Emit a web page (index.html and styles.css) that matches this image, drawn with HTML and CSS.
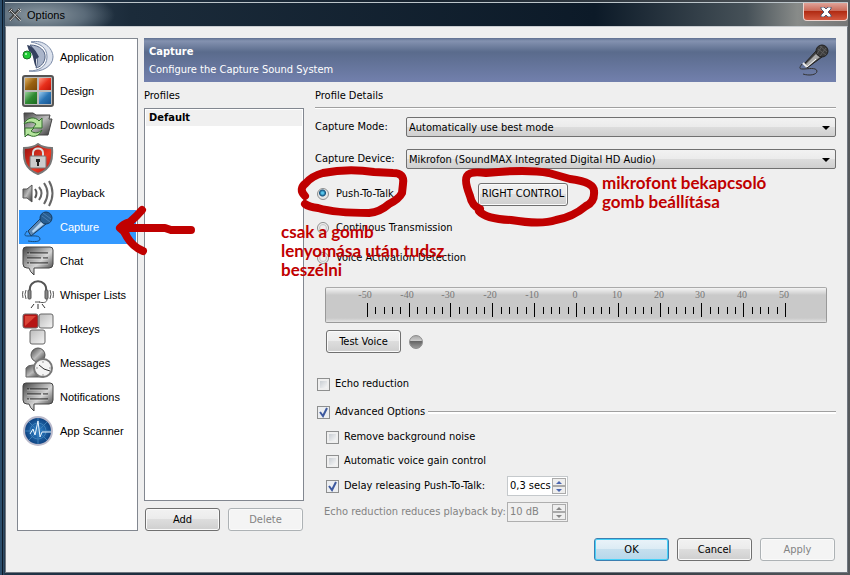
FILE: index.html
```html
<!DOCTYPE html>
<html lang="en">
<head>
    <meta charset="UTF-8">
    <meta name="viewport" content="width=device-width, initial-scale=1.0">
    <title>Options</title>
    <link rel="stylesheet" href="styles.css">
</head>
<body>

<!-- shared gradients and shapes -->
<svg class="defs" width="0" height="0" aria-hidden="true">
    <defs>
        <linearGradient id="gGrey" x1="0" y1="0" x2="1" y2="1"><stop offset="0" stop-color="#444"/><stop offset=".5" stop-color="#bbb"/><stop offset="1" stop-color="#333"/></linearGradient>
        <linearGradient id="gBubble" x1="0" y1="0" x2="1" y2="1"><stop offset="0" stop-color="#444"/><stop offset=".55" stop-color="#d4d4d4"/><stop offset="1" stop-color="#222"/></linearGradient>
        <linearGradient id="gRed" x1="0" y1="0" x2="1" y2="1"><stop offset="0" stop-color="#900d0d"/><stop offset=".6" stop-color="#ec3a24"/><stop offset="1" stop-color="#a91010"/></linearGradient>
        <linearGradient id="gKey" x1="0" y1="0" x2="1" y2="1"><stop offset="0" stop-color="#bbb"/><stop offset="1" stop-color="#f5f5f5"/></linearGradient>
        <linearGradient id="gBrownTile" x1="0" y1="0" x2="1" y2="1"><stop offset="0" stop-color="#e0b060"/><stop offset=".5" stop-color="#9a6210"/><stop offset="1" stop-color="#7a4806"/></linearGradient>
        <linearGradient id="gRedTile" x1="0" y1="0" x2="1" y2="1"><stop offset="0" stop-color="#ff9a84"/><stop offset=".5" stop-color="#e8301c"/><stop offset="1" stop-color="#c01208"/></linearGradient>
        <linearGradient id="gGreenTile" x1="0" y1="0" x2="1" y2="1"><stop offset="0" stop-color="#9ad09a"/><stop offset=".5" stop-color="#2f8a33"/><stop offset="1" stop-color="#1c6a20"/></linearGradient>
        <linearGradient id="gBlueTile" x1="0" y1="0" x2="1" y2="1"><stop offset="0" stop-color="#9acbf0"/><stop offset=".5" stop-color="#2a74b4"/><stop offset="1" stop-color="#175490"/></linearGradient>
        <radialGradient id="gGlobe"><stop offset="0" stop-color="#2f86d0"/><stop offset="1" stop-color="#0d3f7c"/></radialGradient>
        <symbol id="bubble" viewBox="0 0 32 32">
            <path d="M4 2h24q3 0 3 3v14q0 4-4 4H12v7q-4-3-5-7H5q-4 0-4-4V5q0-3 3-3z" fill="url(#gBubble)" stroke="#444"/>
            <path d="M5 8h2M8 8h18M5 13h14M21 13h5M5 18h2M8 18h18" stroke="#111" stroke-width="1"/>
            <path d="M5 9h21M5 14h21M5 19h21" stroke="#eee" stroke-width="1" opacity=".5"/>
        </symbol>
    </defs>
</svg>

<div class="window">
    <header class="titlebar">
        <svg width="16" height="16" viewBox="0 0 16 16" fill="none" aria-hidden="true">
            <path d="M3 3l10 10M2 5l3-3M13 2L3 13" stroke="#444" stroke-width="3"/>
            <path d="M3 3l11 11M14 2L3 14M2 5l3-3M11 2l3 3" stroke="#c4c4c4" stroke-width="1"/>
        </svg>
        <h1>Options</h1>
        <button class="close" aria-label="Close">
            <svg width="12" height="10" viewBox="0 0 12 10" aria-hidden="true"><path d="M1 0h3l2 2 2-2h3v2L8 5l3 3v2H8L6 8l-2 2H1V8l3-3-3-3z" fill="#fff" stroke="#555870"/></svg>
        </button>
    </header>

    <div class="dialog">
        <div class="content">
            <nav class="sidebar">
                <a href="#application">
                    <svg viewBox="0 0 32 32"><path d="M9 1c12-3 22 6 22 15S20 32 7 30c9 0 18-4 18-14S18 3 9 1z" fill="#dce2ed" stroke="#7b8ba8"/><path d="M8 4c10 0 16 6 15 13-1 6-5 9-9 10 3-8 1-16-6-23z" fill="#aab5ca" stroke="#526282"/><path d="M5 4c6 1 9 6 12 12l-3 2v8c-3-5-2-14-7-16z" fill="#34415f"/><circle cx="5" cy="14" r="4" fill="#20cb35" stroke="#167222"/><circle cx="4" cy="13" r="1" fill="#c9ffca"/></svg>
                    Application
                </a>
                <a href="#design">
                    <svg viewBox="0 0 32 32"><rect x="1" y="1" width="30" height="30" rx="2" fill="#bbb" stroke="#555" stroke-width="2"/><path d="M3 3h12v12H3z" fill="url(#gBrownTile)"/><path d="M17 3h12v12H17z" fill="url(#gRedTile)"/><path d="M3 17h12v12H3z" fill="url(#gGreenTile)"/><path d="M17 17h12v12H17z" fill="url(#gBlueTile)"/></svg>
                    Design
                </a>
                <a href="#downloads">
                    <svg viewBox="0 0 32 32"><path d="M2 4h9l3 2h14l-1 4h3l-4 16H3z" fill="url(#gGrey)" stroke="#444"/><path d="M2 15c3-7 11-8 15-3l3-3v10h-9l3-4c-4-3-8-2-12 0z" fill="#b4e49c" stroke="#33702d"/><path d="M20 21c-3 7-10 8-14 4l-3 3v-9h9l-3 3c4 3 8 2 11-1z" fill="#b4e49c" stroke="#33702d"/></svg>
                    Downloads
                </a>
                <a href="#security">
                    <svg viewBox="0 0 32 32"><path d="M16 1c4 3 9 4 14 4 1 12-1 21-14 26C3 26 1 17 2 5c5 0 10-1 14-4z" fill="url(#gRed)" stroke="#777" stroke-width="2"/><path d="M11 14v-4c0-6 10-6 10 0v4" fill="none" stroke="#ddd" stroke-width="2"/><rect x="8" y="13" width="16" height="12" rx="1" fill="#ccc" stroke="#777"/><path d="M14 16h4v3h-1v4h-2v-4h-1z" fill="#222"/></svg>
                    Security
                </a>
                <a href="#playback">
                    <svg viewBox="0 0 32 32" fill="none" stroke="#555" stroke-width="2"><path d="M1 12h4l5-4v17l-5-4H1z" fill="url(#gGrey)" stroke="#555" stroke-width="1"/><path d="M13 12q3 4 0 9"/><path d="M17 10q5 6 0 13M22 6q7 10 0 21M27 4q7 12 0 25" stroke="#666"/></svg>
                    Playback
                </a>
                <a href="#capture" class="active">
                    <svg viewBox="0 0 32 32"><path d="M6 20L19 7l5 6L9 25z" fill="#5c87b2" stroke="#173d63"/><path d="M10 20L20 10l2 3-11 9z" fill="#b8d7f2"/><circle cx="24" cy="7" r="6" fill="#285e92" stroke="#173d63"/><path d="M20 5l8 6M21 2l8 6" stroke="#4a7fb2"/><path d="M5 20c-3 4-3 5 1 5 5 0 12-1 12 3 0 3-6 3-12 2" fill="none" stroke="#174c7d"/></svg>
                    Capture
                </a>
                <a href="#chat">
                    <svg viewBox="0 0 32 32"><use href="#bubble"/></svg>
                    Chat
                </a>
                <a href="#whisper">
                    <svg viewBox="0 0 32 32" fill="none" stroke="#555"><path d="M8 12C6-1 26-1 24 12" stroke-width="2"/><rect x="6" y="11" width="3" height="9" rx="1" fill="#888"/><rect x="23" y="11" width="3" height="9" rx="1" fill="#888"/><path d="M4 11q-2 4 0 9M1 12q-1 3 0 7M28 11q2 4 0 9M31 12q1 3 0 7M25 20c0 4-4 4-8 3M13 23h5"/><path d="M16 25v5M12 25l-3 4M20 25l3 4" stroke="#333"/></svg>
                    Whisper Lists
                </a>
                <a href="#hotkeys">
                    <svg viewBox="0 0 32 32" stroke="#666"><rect x="1" y="1" width="15" height="14" rx="2" fill="#b61616"/><path d="M3 13V3h11z" fill="#da4537" stroke="none"/><rect x="17" y="1" width="14" height="14" rx="2" fill="url(#gKey)"/><rect x="8" y="17" width="15" height="14" rx="2" fill="url(#gKey)"/></svg>
                    Hotkeys
                </a>
                <a href="#messages">
                    <svg viewBox="0 0 32 32"><path d="M4 30v-9q2-3 7-3h9v12z" fill="url(#gGrey)" stroke="#666"/><circle cx="16" cy="8" r="7" fill="url(#gGrey)" stroke="#555"/><circle cx="21" cy="21" r="9" fill="#f4f4f4" stroke="#777" stroke-width="2"/><path d="M17 18l5 4 6 2" fill="none" stroke="#333"/><path d="M21 14v2M21 27v2M14 21h2M27 21h2" stroke="#999"/></svg>
                    Messages
                </a>
                <a href="#notifications">
                    <svg viewBox="0 0 32 32"><use href="#bubble"/></svg>
                    Notifications
                </a>
                <a href="#scanner">
                    <svg viewBox="0 0 32 32"><circle cx="16" cy="16" r="14" fill="url(#gGlobe)" stroke="#bbc" stroke-width="2"/><path d="M3 16h26M16 3v26M7 7l18 18M25 7L7 25" stroke="#3f80b8"/><circle cx="16" cy="16" r="8" fill="none" stroke="#3f80b8"/><path d="M8 19l3-5 2 6 3-14 2 16 2-5h9" fill="none" stroke="#e9f5ff"/></svg>
                    App Scanner
                </a>
            </nav>

            <main class="page">
                <div class="banner">
                    <div>
                        <h2>Capture</h2>
                        <p>Configure the Capture Sound System</p>
                    </div>
                    <svg width="32" height="32" viewBox="0 0 32 32" aria-hidden="true"><path d="M6 20L18 7l6 6L9 24z" fill="#444" stroke="#222"/><path d="M8 20L18 10l4 3L9 23z" fill="#aaa"/><path d="M9 23l9-8" fill="none" stroke="#fff"/><path d="M5 19l4 4" stroke="#eee" stroke-width="2"/><circle cx="24" cy="7" r="6" fill="#3c3c3c" stroke="#222"/><path d="M20 5l8 6M22 2l7 6M24 2l-5 8M28 4l-6 8" stroke="#5e5e5e"/><path d="M4 20c-3 4-3 5 1 5 5 0 13-2 14 2 0 4-8 5-14 3" fill="none" stroke="#333"/></svg>
                </div>

                <div class="columns">
                    <section class="profiles">
                        <h3>Profiles</h3>
                        <ul><li>Default</li></ul>
                        <div class="buttons">
                            <button>Add</button>
                            <button disabled>Delete</button>
                        </div>
                    </section>

                    <section class="details">
                        <h3>Profile Details</h3>
                        <div class="field">
                            <label for="mode">Capture Mode:</label>
                            <span class="select"><select id="mode"><option>Automatically use best mode</option></select></span>
                        </div>
                        <div class="field">
                            <label for="device">Capture Device:</label>
                            <span class="select"><select id="device"><option>Mikrofon (SoundMAX Integrated Digital HD Audio)</option></select></span>
                        </div>
                        <div class="talk">
                            <label><input type="radio" name="activation" checked>Push-To-Talk</label>
                            <button class="hotkey">RIGHT CONTROL</button>
                        </div>
                        <label class="option"><input type="radio" name="activation">Continous Transmission</label>
                        <label class="option"><input type="radio" name="activation">Voice Activation Detection</label>

                        <div class="meter">
                            <svg viewBox="0 0 500 34" aria-hidden="true">
                                <g class="scale">
                                    <text x="39" y="10">-50</text><text x="81" y="10">-40</text><text x="122" y="10">-30</text><text x="164" y="10">-20</text><text x="206" y="10">-10</text><text x="249" y="10">0</text><text x="291" y="10">10</text><text x="333" y="10">20</text><text x="374" y="10">30</text><text x="416" y="10">40</text><text x="458" y="10">50</text>
                                </g>
                                <path class="ticks" d="M41 15h1v14h-1zM83 15h1v14h-1zM124 15h1v14h-1zM166 15h1v14h-1zM208 15h1v14h-1zM250 15h1v14h-1zM292 15h1v14h-1zM334 15h1v14h-1zM375 15h1v14h-1zM417 15h1v14h-1zM459 15h1v14h-1z
                                    M49 19h1v7h-1zM58 19h1v7h-1zM66 19h1v7h-1zM74 19h1v7h-1zM91 19h1v7h-1zM100 19h1v7h-1zM108 19h1v7h-1zM116 19h1v7h-1zM133 19h1v7h-1zM141 19h1v7h-1zM150 19h1v7h-1zM158 19h1v7h-1zM175 19h1v7h-1zM183 19h1v7h-1zM191 19h1v7h-1zM200 19h1v7h-1zM217 19h1v7h-1zM225 19h1v7h-1zM233 19h1v7h-1zM242 19h1v7h-1z
                                    M258 19h1v7h-1zM267 19h1v7h-1zM275 19h1v7h-1zM283 19h1v7h-1zM300 19h1v7h-1zM309 19h1v7h-1zM317 19h1v7h-1zM325 19h1v7h-1zM342 19h1v7h-1zM350 19h1v7h-1zM359 19h1v7h-1zM367 19h1v7h-1zM384 19h1v7h-1zM392 19h1v7h-1zM401 19h1v7h-1zM409 19h1v7h-1zM426 19h1v7h-1zM434 19h1v7h-1zM442 19h1v7h-1zM451 19h1v7h-1z"/>
                            </svg>
                        </div>
                        <div class="test">
                            <button>Test Voice</button>
                            <span class="led"></span>
                        </div>

                        <label class="echo"><input type="checkbox">Echo reduction</label>
                        <div class="advanced">
                            <label><input type="checkbox" checked>Advanced Options</label>
                        </div>
                        <div class="suboptions">
                            <label><input type="checkbox">Remove background noise</label>
                            <label><input type="checkbox">Automatic voice gain control</label>
                            <div class="amount">
                                <label><input type="checkbox" checked>Delay releasing Push-To-Talk:</label>
                                <span class="spin">
                                    <input type="text" value="0,3 secs" aria-label="Release delay">
                                    <span class="arrows"><button class="up" aria-label="Increase delay"></button><button class="down" aria-label="Decrease delay"></button></span>
                                </span>
                            </div>
                            <div class="amount disabled">
                                <label for="playback">Echo reduction reduces playback by:</label>
                                <span class="spin">
                                    <input type="text" id="playback" value="10 dB" disabled>
                                    <span class="arrows"><button class="up" disabled aria-label="Increase level"></button><button class="down" disabled aria-label="Decrease level"></button></span>
                                </span>
                            </div>
                        </div>
                    </section>
                </div>
            </main>
        </div>

        <footer class="buttons">
            <button class="default">OK</button>
            <button>Cancel</button>
            <button disabled>Apply</button>
        </footer>
    </div>
</div>

<!-- hand drawn notes on top of the dialog -->
<div class="notes">
    <svg width="850" height="575" viewBox="0 0 850 575" aria-hidden="true">
        <path d="M305 196Q298 189 306 183Q312 176 323 173Q348 168 374 172L393 173Q405 173 403 184L402 193Q399 199 389 204Q380 212 369 213Q335 213 318 208Q309 207 305 204"/>
        <path d="M480 209Q472 206 470 196Q464 181 467 176Q470 171 486 173Q527 169 549 173L570 179Q594 182 594 191Q595 202 586 206Q573 217 556 220Q541 225 511 220Q486 219 479 211"/>
        <path d="M142 210Q137 216 130 222Q123 224 120 228Q125 231 127 237Q133 247 143 251M122 228H165L171 230H191"/>
    </svg>
    <p class="note-key">mikrofont bekapcsoló<br>gomb beállítása</p>
    <p class="note-talk">csak a gomb<br>lenyomása után tudsz<br>beszélni</p>
</div>

</body>
</html>
```
FILE: styles.css
```css
* {
    box-sizing: border-box;
}
body {
    margin: 0;
    font-family: "DejaVu Sans Condensed", "DejaVu Sans", sans-serif;
    font-size: 11px;
    line-height: 16px;
    color: #000;
}
h1, h2, h3, p, ul {
    margin: 0;
    padding: 0;
    font-size: inherit;
    font-weight: inherit;
    list-style: none;
}
button, input, select {
    font: inherit;
    color: inherit;
    margin: 0;
}
.defs {
    position: absolute;
}

/* window frame */
.window {
    display: flex;
    flex-direction: column;
    min-height: 100vh;
    padding: 2px 2px 2px 5px;
    background: linear-gradient(90deg, #2c4e6c 2px, #0c1826 2px, #0c1826 3px, #31526d 3px, #213447 5px, #17232f 50%, #55595c);
}
.titlebar {
    display: flex;
    align-items: center;
    height: 24px;
    gap: 4px;
    padding-left: 2px;
    border-top: 1px solid #bcc5ca;
    background: radial-gradient(ellipse 75px 24px at 35px 12px, #8d9aa3, #5b6b79 60%, transparent), linear-gradient(90deg, #3a4c5d, #1b2b3a 15%, #0c1a28 70%, #465158 88%, #888b89 94%, #777);
}
.titlebar h1 {
    flex: 1;
    font-family: "Liberation Sans", sans-serif;
}
.close {
    display: flex;
    align-items: center;
    justify-content: center;
    align-self: flex-start;
    width: 45px;
    height: 18px;
    padding: 0;
    border: 1px solid #eed4ce;
    border-top: 0;
    border-radius: 0 0 4px 4px;
    background: linear-gradient(#e0a298, #ca6b5a 45%, #b12b13 50%, #d3583f);
}
.dialog {
    flex: 1;
    display: flex;
    flex-direction: column;
    gap: 7px;
    padding: 11px;
    border: 1px solid #707780;
    border-top-color: #c8ccd0;
    background: #efefef;
}
.content {
    flex: 1;
    display: flex;
    gap: 6px;
}

/* category list */
.sidebar {
    flex: 0 0 121px;
    padding: 1px;
    border: 1px solid #828790;
    background: #fff;
    font-family: "Liberation Sans", sans-serif;
}
.sidebar a {
    display: flex;
    align-items: center;
    gap: 6px;
    height: 34px;
    padding-left: 3px;
    color: #000;
    text-decoration: none;
}
.sidebar svg {
    width: 32px;
    height: 32px;
}
.sidebar a.active {
    background: #3399ff;
    color: #fff;
}

.page {
    flex: 1;
    display: flex;
    flex-direction: column;
}
.banner {
    display: flex;
    align-items: center;
    justify-content: space-between;
    height: 44px;
    padding: 0 6px 0 5px;
    background: linear-gradient(#5f7090, #8492b0 3px, #5a6b8c 14px, #7280ad);
    color: #fff;
}
.banner h2 {
    font-weight: bold;
}
.banner h2, .banner p {
    padding-top: 2px;
}
.columns {
    flex: 1;
    display: flex;
    gap: 11px;
}
.columns h3 {
    height: 26px;
    line-height: 28px;
}

/* profiles */
.profiles {
    flex: 0 0 160px;
    display: flex;
    flex-direction: column;
}
.profiles ul {
    flex: 1;
    padding: 1px;
    border: 1px solid #828790;
    background: #fff;
}
.profiles li {
    padding: 0 3px;
    background: #f0f0f0;
    font-weight: bold;
}
.buttons {
    display: flex;
    gap: 8px;
}
.profiles .buttons {
    padding: 7px 1px 0;
}
.dialog footer {
    justify-content: flex-end;
    padding-right: 1px;
}
.page button:not(.up):not(.down), footer button {
    height: 23px;
    padding: 0;
    border: 1px solid #707070;
    border-radius: 3px;
    background: linear-gradient(#f2f2f2, #ebebeb 50%, #dddddd 50%, #cfcfcf);
    box-shadow: inset 0 0 0 1px #fafafa;
}
.buttons button, .test button {
    width: 75px;
}
.page .buttons button:disabled, footer button:disabled {
    border-color: #adb2b5;
    background: #f4f4f4;
    color: #838383;
}
footer .default {
    border-color: #3c7fb1;
    background: linear-gradient(#eaf3f9, #dbebf4 50%, #c5dfee 50%, #b5d7eb);
    box-shadow: inset 0 0 0 1px #46d1f8;
}

/* profile details */
.details {
    flex: 1;
    display: flex;
    flex-direction: column;
}
.details h3 {
    border-bottom: 1px solid #a0a0a0;
    box-shadow: 0 1px #fff;
    margin-bottom: 9px;
}
.field {
    display: flex;
    align-items: center;
    margin-bottom: 12px;
}
.field label {
    flex: 0 0 91px;
}
.select {
    flex: 1;
    display: flex;
    position: relative;
}
.select select {
    flex: 1;
    height: 20px;
    padding: 1px 2px 0;
    appearance: none;
    border: 1px solid #707070;
    border-radius: 2px;
    background: linear-gradient(#f2f2f2, #ebebeb 50%, #dddddd 50%, #cfcfcf);
}
.select::after {
    content: "";
    position: absolute;
    right: 6px;
    top: 9px;
    border: 4px solid transparent;
    border-top-color: #000;
    border-bottom: 0;
    pointer-events: none;
}
.details label {
    display: flex;
    align-items: center;
}
input[type="radio"], input[type="checkbox"] {
    appearance: none;
    flex: none;
    width: 13px;
    height: 13px;
    margin-right: 5px;
    border: 1px solid #8e8f8f;
    background: linear-gradient(135deg, #c9ced3, #f6f6f6) content-box #f4f4f4;
    padding: 2px;
}
input[type="radio"] {
    width: 12px;
    height: 12px;
    margin-right: 7px;
    border-radius: 50%;
    background: radial-gradient(#eee 30%, #ccc 50%, #f4f4f4 65%);
}
input[type="radio"]:checked {
    background: radial-gradient(circle at 45% 40%, #58c7ee 1px, #12517c 3px, #e7e7e7 4px);
}
input[type="checkbox"]:checked {
    background: url("data:image/svg+xml,%3Csvg xmlns='http://www.w3.org/2000/svg' viewBox='0 0 11 11'%3E%3Cpath d='M2 5l3 4 4-8' fill='none' stroke='%233d599f' stroke-width='2'/%3E%3C/svg%3E") #eceef1;
}
.talk {
    display: flex;
    align-items: center;
    height: 26px;
    padding-left: 2px;
    margin-bottom: 13px;
}
.talk label {
    flex: 0 0 161px;
}
.talk .hotkey {
    width: 90px;
    white-space: nowrap;
}
.details .option {
    padding-left: 2px;
    margin-bottom: 14px;
}
.meter {
    height: 36px;
    margin: 7px 9px 7px 10px;
    border: 1px solid #999;
    border-top-color: #aaa;
    border-radius: 2px;
    background: linear-gradient(#f4f4f4, #d6d6d6 5px, #c9c9c9 7px, #c9c9c9 30px, #e2e2e2);
}
.meter svg {
    display: block;
    width: 100%;
    height: 34px;
}
.scale {
    fill: #777;
    font-family: "Liberation Serif", serif;
    font-size: 10px;
    text-anchor: middle;
}
.ticks {
    fill: #000;
    shape-rendering: crispEdges;
}
.test {
    display: flex;
    align-items: center;
    gap: 8px;
    padding-left: 11px;
}
.led {
    width: 14px;
    height: 14px;
    border: 1px solid #8c8c8c;
    border-radius: 50%;
    background: linear-gradient(#aaa, #ccc 40%, #666 45%, #999);
}
.details .echo {
    margin: 23px 0 12px 2px;
}
.advanced {
    display: flex;
    align-items: center;
    gap: 3px;
    padding-left: 2px;
}
.advanced::after {
    content: "";
    flex: 1;
    height: 2px;
    border-top: 1px solid #a0a0a0;
    background: #fff;
}
.suboptions {
    display: flex;
    flex-direction: column;
    gap: 8px;
    padding: 9px 0 0 11px;
}
.amount {
    display: flex;
    align-items: center;
    height: 18px;
}
.amount label {
    flex: 0 0 181px;
    white-space: nowrap;
}
.amount.disabled {
    color: #838383;
}
.disabled label {
    margin-left: -2px;
    flex-basis: 183px;
}
.spin {
    display: flex;
    width: 61px;
    height: 20px;
    padding: 1px;
    border: 1px solid #c5c9cc;
    background: #fff;
}
.spin input {
    flex: 1;
    min-width: 0;
    padding: 0 1px;
    border: 0;
    background: none;
}
.disabled .spin {
    border-color: #afafaf;
    background: #f0f0f0;
}
.arrows {
    display: flex;
    flex-direction: column;
    width: 14px;
}
.arrows button {
    flex: 1;
    display: flex;
    align-items: center;
    justify-content: center;
    min-height: 0;
    padding: 0;
    border: 1px solid #aaa;
    background: #eee;
    color: #4a66b0;
}
.arrows button:disabled {
    color: #888;
}
.up::before, .down::before {
    content: "";
    border: 3px solid transparent;
}
.up::before {
    border-top: 0;
    border-bottom-color: currentColor;
}
.down::before {
    border-bottom: 0;
    border-top-color: currentColor;
}

/* notes */
.notes {
    position: absolute;
    top: 0;
    left: 0;
    pointer-events: none;
    color: #c00000;
    font-family: Lato, sans-serif;
    font-size: 17px;
    font-weight: bold;
    line-height: 19px;
    white-space: nowrap;
}
.notes svg {
    display: block;
    fill: none;
    stroke: #c00000;
    stroke-width: 8;
    stroke-linecap: round;
    stroke-linejoin: round;
}
.note-key {
    position: absolute;
    left: 602px;
    top: 173px;
}
.note-talk {
    position: absolute;
    left: 281px;
    top: 222px;
}
```
